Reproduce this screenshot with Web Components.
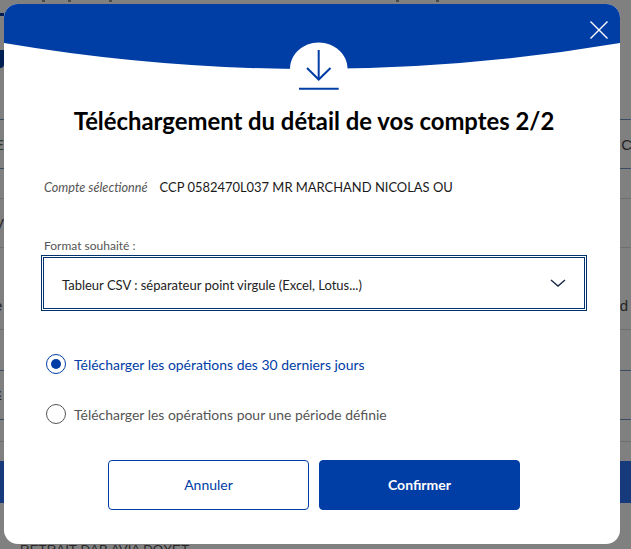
<!DOCTYPE html>
<html lang="fr">
<head>
<meta charset="utf-8">
<title>Téléchargement</title>
<style>
  html, body { margin: 0; height: 100%; }
  body { font-family: Lato, "Liberation Sans", sans-serif; overflow: hidden; }
</style>
</head>
<body>

<template id="tpl-backdrop">
  <style>
    :host { display: block; position: relative; width: 631px; height: 549px; background: #808080; overflow: hidden; }
    /* the dimmed page behind the dialog, only its edges show */
    .page { display: flex; flex-direction: column; height: 549px; font: 15px "Liberation Sans", sans-serif; color: #262626; }
    .row { display: flex; align-items: center; justify-content: space-between; box-sizing: border-box; flex: none; }
    .dark { border-bottom: 1px solid #3d4a63; }
    .light { border-bottom: 1px solid #6f6f6f; }
    .ticks { height: 3px; align-items: flex-start; justify-content: flex-start; }
    .ticks i { display: block; width: 3px; height: 2px; background: #4a4a4a; }
    .mark { display: block; width: 4px; background: #001f53; }
    .band { height: 42px; background: #173a7c; }
    .last { font-size: 13.33px; line-height: 16px; padding-left: 20px; white-space: nowrap; }
    .cut { margin-left: -6px; }
    .wrap { position: absolute; left: 4px; top: 4px; }
  </style>
  <div class="page">
    <div class="row ticks"><i style="margin-left:42px"></i><i style="margin-left:23px"></i><i style="margin-left:38px"></i><i style="margin-left:284px"></i><i style="margin-left:37px"></i></div>
    <div class="row" style="height:10px"></div>
    <div class="row" style="height:3px"><i class="mark" style="height:3px"></i></div>
    <div class="row" style="height:34px"></div>
    <div class="row" style="height:18px"><i class="mark" style="height:18px;border-radius:0 0 4px 0"></i></div>
    <div class="row dark" style="height:52px"></div>
    <div class="row dark" style="height:49px;color:#2c3a2c"><span class="cut">E</span><span style="margin-right:-1px;color:#262626">C</span></div>
    <div class="row light" style="height:30px"></div>
    <div class="row light" style="height:49px"><span class="cut">V</span></div>
    <div class="row light" style="height:82px"><span class="cut" style="padding-top:34px">e</span><span style="padding-top:34px;margin-right:3px">d</span></div>
    <div class="row dark" style="height:41px"></div>
    <div class="row dark" style="height:49px"><span class="cut" style="text-decoration:underline;padding-bottom:6px">c</span></div>
    <div class="row light" style="height:22px"></div>
    <div class="row" style="height:19px"></div>
    <div class="row band"></div>
    <div class="row" style="height:39px"></div>
    <div class="last">RETRAIT DAB AVIA DOYET</div>
  </div>
  <div class="wrap"><slot></slot></div>
</template>

<template id="tpl-dialog">
  <style>
    :host { display: flex; flex-direction: column; position: relative; width: 616px; height: 540px; background: #fff; border-radius: 14px; overflow: hidden; color: #1a1a1a; }
    .cap { display: block; position: absolute; left: 0; top: 0; }
    .close { position: absolute; left: 586px; top: 17px; width: 18px; height: 18px; }
    .body { display: flex; flex-direction: column; position: relative; padding: 97px 34px 0 38px; }
    h1 { margin: 0; text-align: center; font-size: 23.85px; line-height: 40px; font-weight: 700; color: #000; }
  </style>
  <svg class="cap" width="616" height="100" viewBox="0 0 616 100">
    <path d="M0 39V0H616V39Q308 91 0 39Z" fill="#003da5"/>
    <path d="M286 66V65C286 50 299 38.5 314.7 38.5S343.5 50 343.5 65V66Z" fill="#fff"/>
    <g fill="none" stroke="#003da5" stroke-width="2">
      <path d="M314.7 46V75.5"/>
      <path d="M303 64L314.7 75.5L326.5 64"/>
      <path d="M295 84.7H334.7"/>
    </g>
  </svg>
  <svg class="close" viewBox="0 0 18 18" fill="none" stroke="#fff" stroke-width="1.4"><path d="M.5 .5L17.5 17.5M17.5 .5L.5 17.5"/></svg>
  <div class="body">
    <h1><slot name="title"></slot></h1>
    <slot></slot>
  </div>
</template>

<template id="tpl-account">
  <style>
    :host { display: flex; align-items: baseline; gap: 12px; margin: 36px 0 0 2px; font-size: 12.95px; line-height: 20px; }
    em { color: #555; font-size: 12.7px; }
  </style>
  <em><slot name="label"></slot></em><span><slot></slot></span>
</template>

<template id="tpl-format">
  <style>
    :host { display: block; margin-top: 41px; }
    label { display: block; font-size: 12px; line-height: 16px; color: #555; margin: 0 0 1px 2px; }
    .box { display: flex; align-items: center; justify-content: space-between; box-sizing: border-box; height: 56px; width: 546px; margin-left: -1px; padding: 0 20px 0 20px; border: 1px solid #00336e; outline: 1px solid #00336e; outline-offset: -3px; font-size: 13px; color: #222; }
    .box span { padding-top: 3px; }
  </style>
  <label><slot name="label"></slot></label>
  <div class="box"><span><slot></slot></span>
    <svg width="16" height="8" viewBox="0 0 16 8" fill="none" stroke="#1a2a44" stroke-width="1.4"><path d="M1 1L8 7L15 1"/></svg>
  </div>
</template>

<template id="tpl-radio">
  <style>
    :host { display: flex; align-items: center; gap: 8px; height: 20px; margin-left: 4px; font-size: 13.95px; color: #555; }
    :host([checked]) { color: #003da5; }
    .dot { box-sizing: border-box; width: 20px; height: 20px; border-radius: 50%; border: 1px solid #555; display: flex; align-items: center; justify-content: center; }
    :host([checked]) .dot { border: 1.5px solid #003da5; }
    :host([checked]) .dot::after { content: ""; width: 10px; height: 10px; border-radius: 50%; background: #003da5; }
  </style>
  <span class="dot"></span><span><slot></slot></span>
</template>

<template id="tpl-button">
  <style>
    :host { display: flex; align-items: center; justify-content: center; box-sizing: border-box; width: 201px; height: 50px; padding-bottom: 2px; border-radius: 4px; border: 1px solid #003da5; font-size: 14px; color: #003da5; background: #fff; }
    :host([primary]) { background: #003da5; color: #fff; font-weight: 700; }
  </style>
  <slot></slot>
</template>

<template id="tpl-actions">
  <style>
    :host { display: flex; gap: 10px; justify-content: center; margin: 36px 0 0 0; }
  </style>
  <slot></slot>
</template>

<dl-backdrop>
  <dl-dialog>
    <span slot="title">Téléchargement du détail de vos comptes 2/2</span>
    <dl-account><span slot="label">Compte sélectionné</span>CCP 0582470L037 MR MARCHAND NICOLAS OU</dl-account>
    <dl-format><span slot="label">Format souhaité :</span>Tableur CSV : séparateur point virgule (Excel, Lotus...)</dl-format>
    <dl-radio checked style="margin-top:43px">Télécharger les opérations des 30 derniers jours</dl-radio>
    <dl-radio style="margin-top:30px">Télécharger les opérations pour une période définie</dl-radio>
    <dl-actions>
      <dl-button>Annuler</dl-button>
      <dl-button primary>Confirmer</dl-button>
    </dl-actions>
  </dl-dialog>
</dl-backdrop>

<script>
  // every element is just a template stamped in a shadow root
  function define(name, tplId) {
    customElements.define(name, class extends HTMLElement {
      constructor() {
        super();
        this.attachShadow({ mode: 'open' }).appendChild(document.getElementById(tplId).content.cloneNode(true));
      }
    });
  }
  define('dl-backdrop', 'tpl-backdrop');
  define('dl-dialog', 'tpl-dialog');
  define('dl-account', 'tpl-account');
  define('dl-format', 'tpl-format');
  define('dl-radio', 'tpl-radio');
  define('dl-button', 'tpl-button');
  define('dl-actions', 'tpl-actions');
</script>
</body>
</html>
